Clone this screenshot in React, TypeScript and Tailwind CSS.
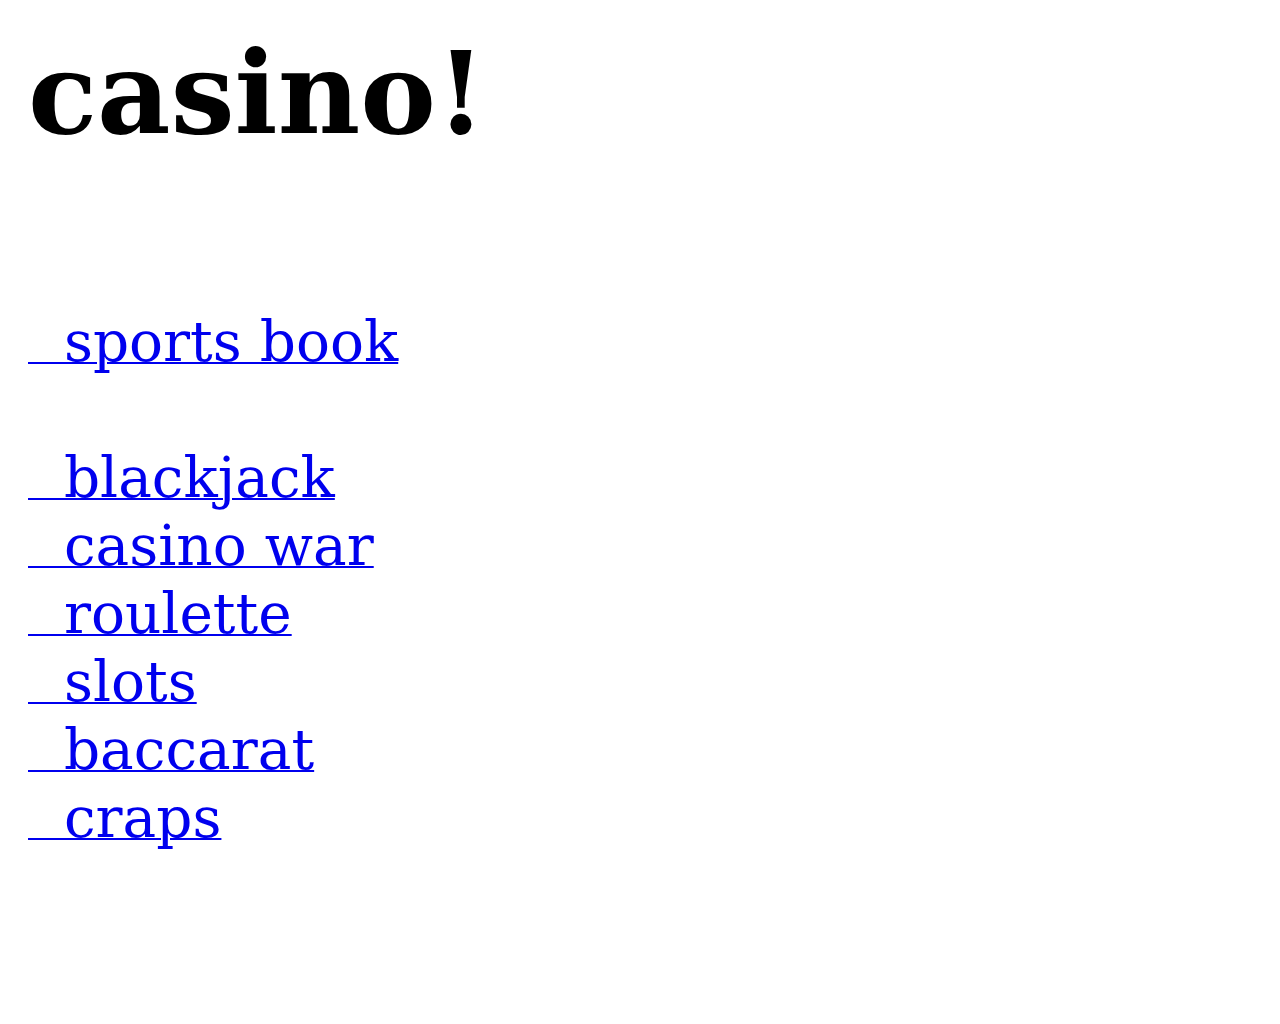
export default function App() {
  const games = ["blackjack", "casino war", "roulette", "slots", "baccarat", "craps"];
  return (
    <div className="min-h-screen bg-white px-[28px] pt-[27px] font-['DejaVu_Serif',serif]">
      <h1 className="text-[113.5px] font-bold leading-[1.164] text-black">casino!</h1>
      <div className="mt-[149px] text-[56.5px] leading-[68px]">
        <a href="#" className="text-[#0000ee] underline decoration-2">{"\u00a0\u00a0sports book"}</a>
      </div>
      <ul className="mt-[68px] text-[56.5px] leading-[68px]">
        {games.map(g => (
          <li key={g}>
            <a href="#" className="text-[#0000ee] underline decoration-2">{"\u00a0\u00a0" + g}</a>
          </li>
        ))}
      </ul>
    </div>
  );
}
